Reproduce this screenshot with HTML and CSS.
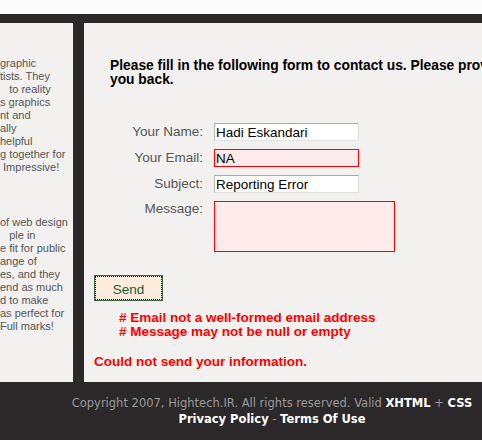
FILE: index.html
```html
<!DOCTYPE html>
<html>
<head>
<meta charset="utf-8">
<title>Contact Us</title>
<link rel="stylesheet" href="styles.css">
</head>
<body>
<div class="page">
  <div class="cols">
    <div class="side">
      <p class="quote">graphic<br>tists. They<br>&nbsp;&nbsp;&nbsp;to reality<br>s graphics<br>nt and<br>ally<br>helpful<br>g together for<br>&nbsp;Impressive!</p>
      <p class="quote">of web design<br>&nbsp;&nbsp;&nbsp;ple in<br>e fit for public<br>ange of<br>es, and they<br>end as much<br>d to make<br>as perfect for<br>Full marks!</p>
    </div>
    <div class="main">
      <h2 class="intro">Please fill in the following form to contact us. Please provide correct information so we can call<br>you back.</h2>
      <form class="contact">
        <label class="lbl" for="name">Your Name:</label>
        <input class="field" id="name" type="text" value="Hadi Eskandari">
        <label class="lbl" for="email">Your Email:</label>
        <input class="field bad" id="email" type="text" value="NA">
        <label class="lbl" for="subject">Subject:</label>
        <input class="field" id="subject" type="text" value="Reporting Error">
        <label class="lbl lbl-top" for="message">Message:</label>
        <textarea class="msg bad" id="message"></textarea>
      </form>
      <button class="send" type="button">Send</button>
      <ul class="errors">
        <li>Email not a well-formed email address</li>
        <li>Message may not be null or empty</li>
      </ul>
      <p class="fail">Could not send your information.</p>
    </div>
  </div>
  <div class="footer">
    <p class="copy">Copyright 2007, Hightech.IR. All rights reserved. Valid <a href="#">XHTML</a> + <a href="#">CSS</a></p>
    <p class="copy"><a href="#">Privacy Policy</a> - <a href="#">Terms Of Use</a></p>
  </div>
</div>
</body>
</html>
```

FILE: styles.css
```css
html, body {
  margin: 0;
  padding: 0;
  overflow: hidden;
  background: #fcfcfc;
}

.page {
  margin-top: 14px;
  margin-left: -110px;
  width: 764px;
  padding-top: 9px;
  background: #2a2828;
  font-family: "Liberation Sans", Arial, sans-serif;
}

.cols {
  display: flex;
  gap: 11px;
  height: 359px;
}

.side {
  width: 183px;
  background: #f2f1ef;
  padding: 34px 0 0 110px;
  box-sizing: border-box;
  overflow: hidden;
}

.quote {
  margin: 0 0 42px;
  font-size: 11px;
  line-height: 13px;
  color: #555;
  white-space: nowrap;
}

.main {
  flex: 1;
  background: #f2f1ef;
  padding: 36px 0 0 10px;
  overflow: hidden;
}

.intro {
  margin: 0 0 0 16px;
  font-size: 13.8px;
  line-height: 14px;
  font-weight: bold;
  color: #000;
  white-space: nowrap;
}

.contact {
  display: grid;
  grid-template-columns: 93px auto;
  justify-content: start;
  column-gap: 11px;
  row-gap: 8px;
  margin: 36px 0 0 16px;
}

.lbl {
  text-align: right;
  font-size: 13.5px;
  line-height: 18px;
  color: #555;
}

.lbl-top {
  align-self: start;
  line-height: 16px;
}

.field {
  box-sizing: border-box;
  width: 145px;
  height: 18px;
  margin: 0;
  padding: 0 1px;
  font-family: "Liberation Sans", Arial, sans-serif;
  font-size: 13.5px;
  color: #000;
  background: #fff;
  border: 1px solid;
  border-color: #a9a9a9 #dedede #e3e3e3 #b5b5b5;
}

.msg {
  box-sizing: border-box;
  width: 181px;
  height: 51px;
  margin: 0;
  padding: 1px;
  resize: none;
  font-family: "Liberation Sans", Arial, sans-serif;
  font-size: 13.5px;
}

.bad {
  border: 1px solid #f00;
  background: #fdeaea;
}

.send {
  display: block;
  box-sizing: border-box;
  width: 69px;
  height: 26px;
  margin: 23px 0 0;
  padding: 3px 0 0;
  background: #fdecdc;
  border: 1px solid #3b6a3e;
  outline: 1px dotted #000;
  outline-offset: -2px;
  color: #1a5a3a;
  font-family: "Liberation Sans", Arial, sans-serif;
  font-size: 13.5px;
}

.errors {
  list-style: none;
  margin: 10px 0 0;
  padding: 0 0 0 25px;
  font-size: 13.5px;
  line-height: 14px;
  font-weight: bold;
  color: #f00;
}

.errors li::before {
  content: "# ";
}

.fail {
  margin: 16px 0 0;
  font-size: 13.5px;
  line-height: 14px;
  font-weight: bold;
  color: #f00;
}

.footer {
  height: 58px;
  padding-top: 13px;
  box-sizing: border-box;
  text-align: center;
}

.copy {
  margin: 0;
  font-family: "DejaVu Sans", Verdana, sans-serif;
  font-size: 11.5px;
  line-height: 16px;
  color: #9a9a9a;
}

.copy a {
  color: #fff;
  font-weight: bold;
  text-decoration: none;
}
```
